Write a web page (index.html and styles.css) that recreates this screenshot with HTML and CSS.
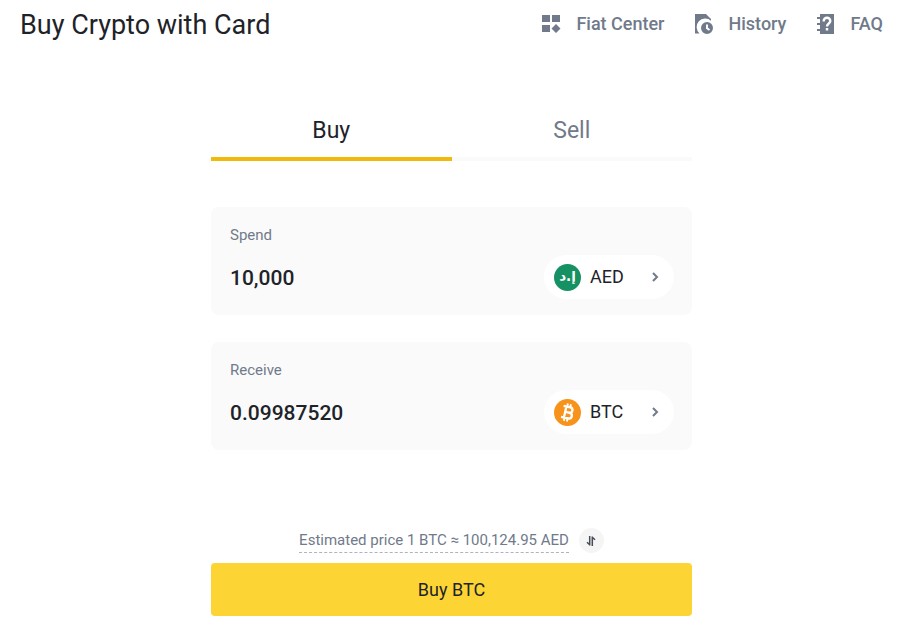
FILE: index.html
```html
<!DOCTYPE html>
<html lang="en">
<head>
<meta charset="utf-8">
<meta name="viewport" content="width=device-width, initial-scale=1">
<title>Buy Crypto with Card</title>
<link rel="stylesheet" href="styles.css">
</head>
<body>
<header class="header">
  <h1 class="title">Buy Crypto with Card</h1>
  <nav class="nav">
    <a class="nav-link" href="#fiat">
      <svg class="nav-icon" viewBox="0 0 20 20" aria-hidden="true"><path d="M0 1h8v7H0zM10 1h8v7h-8zM0 11h8v7H0zM14 10l4.500 4.500-4.500 4.500-4.500-4.500z"/></svg>
      <span>Fiat Center</span>
    </a>
    <a class="nav-link" href="#history">
      <svg class="nav-icon" viewBox="0 0 20 20" aria-hidden="true"><path d="M1 0h11l5 5v1.700A7.300 7.300 0 0 0 5.500 19.500H1z"/><path fill-rule="evenodd" d="M13 8a6 6 0 1 1 0 12 6 6 0 0 1 0-12zM12 10.500v4.300l2.900 2 1.200-1.600-2.100-1.400v-3.300z"/></svg>
      <span>History</span>
    </a>
    <a class="nav-link" href="#faq">
      <svg class="nav-icon" viewBox="0 0 20 20" aria-hidden="true"><path d="M4 0h14v20H4zM1 3h2v2H1zM1 9h2v2H1zM1 15h2v2H1zM3 3h1v2H3zM3 9h1v2H3zM3 15h1v2H3z"/><path class="cut" d="M7.700 7.500V7a3.300 3.300 0 0 1 6.600 0c0 2.500-3.300 2.500-3.300 5.500M11 14v2.500"/></svg>
      <span>FAQ</span>
    </a>
  </nav>
</header>
<main class="trade">
  <div class="tabs" role="tablist">
    <button class="tab tab-active" type="button" role="tab" aria-selected="true">Buy</button>
    <button class="tab" type="button" role="tab" aria-selected="false">Sell</button>
  </div>
  <form class="form">
    <div class="field">
      <label class="field-label" for="spend">Spend</label>
      <div class="field-row">
        <input class="amount" id="spend" type="text" inputmode="decimal" value="10,000">
        <button class="currency" type="button">
          <svg class="coin" viewBox="0 0 28 28" aria-hidden="true"><circle class="aed" cx="14" cy="14" r="14"/><text class="coin-text" x="14" y="18" text-anchor="middle">إ.د</text></svg>
          <span class="code">AED</span>
          <svg class="chevron" viewBox="0 0 10 10" aria-hidden="true"><path d="M3 1l4 4-4 4"/></svg>
        </button>
      </div>
    </div>
    <div class="field">
      <label class="field-label" for="receive">Receive</label>
      <div class="field-row">
        <input class="amount" id="receive" type="text" inputmode="decimal" value="0.09987520">
        <button class="currency" type="button">
          <svg class="coin" viewBox="0 0 28 28" aria-hidden="true"><circle class="btc" cx="14" cy="14" r="14"/><g class="btc-mark" transform="rotate(13 14 14)"><path d="M8.500 8.200h7.200a2.800 2.800 0 0 1 0 5.600h-4M11.700 13.800h4.500a3 3 0 0 1 0 6H8.500M11.500 8.200v11.600"/><path class="btc-bars" d="M12.300 4.800v3.400M15.500 4.800v3.400M12.300 19.800v3.400M15.500 19.800v3.400"/></g></svg>
          <span class="code">BTC</span>
          <svg class="chevron" viewBox="0 0 10 10" aria-hidden="true"><path d="M3 1l4 4-4 4"/></svg>
        </button>
      </div>
    </div>
    <div class="estimate">
      <span class="price">Estimated price 1 BTC ≈ 100,124.95 AED</span>
      <button class="swap" type="button" aria-label="Swap price direction"><svg class="swap-icon" viewBox="0 0 12 12" aria-hidden="true"><path d="M4.700 1v9.500M4.700 9.800L2 7.200M7.300 11V1.500M7.300 2.200L10 4.800"/></svg></button>
    </div>
    <button class="submit" type="button">Buy BTC</button>
  </form>
</main>
</body>
</html>
```
FILE: styles.css
```css
* { box-sizing: border-box; }

body {
  margin: 0;
  background: #fff;
  color: #1e2329;
  font-family: Roboto, "Liberation Sans", sans-serif;
}

button, input { font: inherit; color: inherit; border: 0; padding: 0; margin: 0; }
button { cursor: pointer; }

.header {
  display: flex;
  align-items: center;
  justify-content: space-between;
  padding: 0 20px;
}

.title { margin: 0; padding-top: 2px; font-size: 27px; font-weight: 400; line-height: 46px; }

.nav { display: flex; gap: 30px; }

.nav-link {
  display: flex;
  align-items: center;
  gap: 14px;
  color: #707a8a;
  font-size: 18px;
  font-weight: 500;
  line-height: 24px;
  text-decoration: none;
}

.nav-icon { width: 20px; height: 20px; fill: currentColor; }
.cut { fill: none; stroke: #fff; stroke-width: 2.4; }

.trade {
  max-width: 481px;
  margin: 52px auto 0;
}

.tabs { display: grid; grid-template-columns: 1fr 1fr; }

.tab {
  height: 61px;
  padding-top: 4px;
  background: none;
  border-bottom: 4px solid #fafafa;
  color: #707a8a;
  font-size: 23px;
  line-height: 28px;
}

.tab-active { border-color: #f0b90b; color: #1e2329; }

.form { display: flex; flex-direction: column; padding-top: 46px; }

.field {
  margin-bottom: 27px;
  padding: 18px 18px 16px 19px;
  border-radius: 8px;
  background: #fafafa;
}

.field-label { display: block; color: #707a8a; font-size: 15px; line-height: 20px; }

.field-row { display: flex; align-items: center; padding-top: 10px; }

.amount {
  flex: 1;
  min-width: 0;
  height: 30px;
  padding-top: 2px;
  background: none;
  font-size: 21px;
  font-weight: 500;
  line-height: 28px;
  outline: 0;
}

.currency {
  display: flex;
  align-items: center;
  width: 130px;
  height: 44px;
  padding: 0 14px 0 10px;
  border-radius: 22px;
  background: #fff;
}

.coin { width: 27px; height: 27px; }
.aed { fill: #159163; }
.btc { fill: #f7931a; }
.coin-text { fill: #fff; font: bold 14px "DejaVu Sans", sans-serif; }
.btc-mark { fill: none; stroke: #fff; stroke-width: 2.4; }
.btc-bars { stroke-width: 2; }

.code { margin-left: 9px; font-size: 18px; line-height: 24px; }

.chevron {
  width: 10px;
  height: 10px;
  margin-left: auto;
  fill: none;
  stroke: #707a8a;
  stroke-width: 2;
}

.estimate {
  display: flex;
  align-items: center;
  justify-content: center;
  gap: 10px;
  padding: 51px 0 10px;
}

.price {
  border-bottom: 1px dashed #aeb4bc;
  color: #707a8a;
  font-size: 15px;
  line-height: 24px;
}

.swap {
  display: flex;
  align-items: center;
  justify-content: center;
  width: 25px;
  height: 25px;
  border-radius: 50%;
  background: #f5f5f5;
}

.swap-icon { width: 12px; height: 12px; fill: none; stroke: #474d57; stroke-width: 1.5; }

.submit {
  height: 53px;
  border-radius: 4px;
  background: #fcd535;
  font-size: 18px;
  line-height: 24px;
}
```
